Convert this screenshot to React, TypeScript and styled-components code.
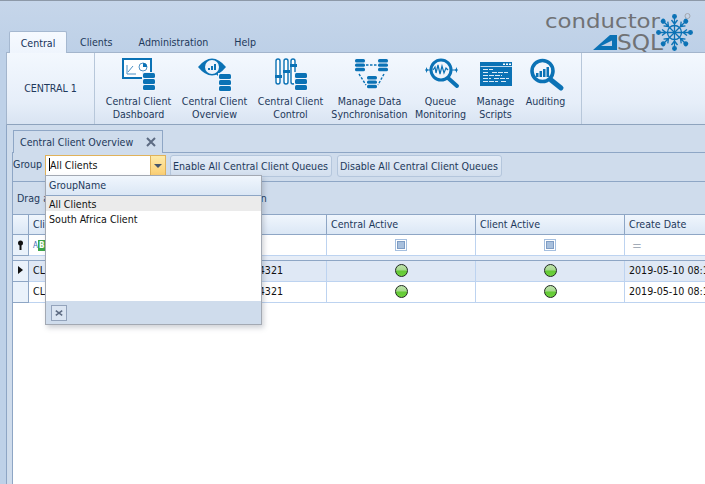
import React from 'react';
import styled, { createGlobalStyle } from 'styled-components';

const BLUE = '#0b72b5';

const GlobalStyle = createGlobalStyle`
    html, body {
        margin: 0;
        padding: 0;
        overflow: hidden;
        background: #fff;
    }
    * {
        box-sizing: border-box;
    }
`;

const Db = ({ x, y, w = 12, slab = 5 }: { x: number; y: number; w?: number; slab?: number }) => (
    <g>
        <rect x={x - 1} y={y - 1} width={w + 2} height={slab * 3 + 4} fill="#eef4fc" />
        {[0, 1, 2].map(i => (
            <rect key={i} x={x} y={y + i * (slab + 1)} width={w} height={slab} rx={1.5} fill={BLUE} />
        ))}
    </g>
);

const DashboardIcon = () => (
    <IconSvg viewBox="0 0 44 38">
        <rect x="6" y="4" width="28" height="19" fill="#fff" stroke={BLUE} strokeWidth="2" />
        <path d="M10 19V10M10 19H19M11 17L16 11" stroke="#4d90c4" strokeWidth="1" fill="none" />
        <circle cx="26" cy="12" r="4" fill="none" stroke="#4d90c4" strokeWidth="1" />
        <path d="M26 12V8A4 4 0 0 1 30 12Z" fill={BLUE} />
        <Db x={26} y={18} />
    </IconSvg>
);

const OverviewIcon = () => (
    <IconSvg viewBox="0 0 44 38">
        <path d="M5 12Q19 -5 33 12Q19 29 5 12Z" fill={BLUE} />
        <circle cx="19" cy="12" r="7" fill="#eef4fc" />
        <path d="M15 15h2v-2h-2zM18 15h2v-4h-2zM21 15h2v-6h-2z" fill={BLUE} />
        <path d="M24 18L28 22" stroke={BLUE} strokeWidth="3" />
        <Db x={26} y={19} />
    </IconSvg>
);

const ControlIcon = () => (
    <IconSvg viewBox="0 0 44 38">
        {[9, 17, 24].map(x => (
            <rect key={x} x={x - 2} y="4" width="4" height="25" rx="2" fill="#fff" stroke={BLUE} strokeWidth="1.4" />
        ))}
        <rect x="6" y="20" width="7" height="3" fill={BLUE} />
        <rect x="14" y="15" width="7" height="3" fill={BLUE} />
        <rect x="21" y="9" width="7" height="3" fill={BLUE} />
        <Db x={26} y={18} />
    </IconSvg>
);

const SyncIcon = () => (
    <IconSvg viewBox="0 0 44 38">
        <Db x={7} y={4} w={10} slab={3.4} />
        <Db x={30} y={4} w={10} slab={3.4} />
        <Db x={19} y={21} w={10} slab={3.4} />
        <path d="M18 10H29M11 19L18 30M36 19L30 30" stroke={BLUE} strokeWidth="1.4" strokeDasharray="2.5 1.5" fill="none" />
    </IconSvg>
);

const QueueIcon = () => (
    <IconSvg viewBox="0 0 44 38">
        <path d="M6 15H12M32 15H39" stroke={BLUE} strokeWidth="1.2" />
        <path d="M9 15L7 12V18Z" fill={BLUE} />
        <path d="M36 15L38 12V18Z" fill={BLUE} />
        <circle cx="22" cy="15" r="10" fill="#f0f5fc" stroke={BLUE} strokeWidth="3" />
        <path d="M14 15L16 12L17 18L19 10L21 19L23 11L25 18L27 13L29 15" fill="none" stroke={BLUE} strokeWidth="1.2" />
        <path d="M29 23L38 31" stroke={BLUE} strokeWidth="4" strokeLinecap="round" />
    </IconSvg>
);

const ScriptsIcon = () => (
    <IconSvg viewBox="0 0 44 38">
        <rect x="6" y="7" width="32" height="24" fill={BLUE} />
        <path d="M6.500 11.500H38" stroke="#eef4fc" strokeWidth="0.8" />
        <path d="M29 9.300h2M32 9.300h2M35 9.300h2" stroke="#fff" strokeWidth="1.4" />
        <path d="M9 14.500H19M9 17.500H15M18 17.500H34M9 20.500H28M9 23.500H17M20 23.500H35M9 26.500H24M27 26.500H32" stroke="#dcebf7" strokeWidth="1.2" strokeDasharray="5 1" />
    </IconSvg>
);

const AuditingIcon = () => (
    <IconSvg viewBox="0 0 44 38">
        <circle cx="18.500" cy="16" r="10.500" fill="#f0f5fc" stroke={BLUE} strokeWidth="3.600" />
        <path d="M12 22h2.500v-4H12zM15.500 22H18v-6h-2.500zM19 22h2.500v-8H19zM22.500 22H25v-10h-2.500z" fill={BLUE} />
        <path d="M27 25L37 33" stroke={BLUE} strokeWidth="5" strokeLinecap="round" />
    </IconSvg>
);

const ribbonButtons = [
    { lines: ['Central Client', 'Dashboard'], width: 65, icon: <DashboardIcon /> },
    { lines: ['Central Client', 'Overview'], width: 65, icon: <OverviewIcon /> },
    { lines: ['Central Client', 'Control'], width: 65, icon: <ControlIcon /> },
    { lines: ['Manage Data', 'Synchronisation'], width: 71, icon: <SyncIcon /> },
    { lines: ['Queue', 'Monitoring'], width: 49, icon: <QueueIcon /> },
    { lines: ['Manage', 'Scripts'], width: 39, icon: <ScriptsIcon /> },
    { lines: ['Auditing'], width: 39, icon: <AuditingIcon /> },
];

const Logo = () => (
    <LogoSvg viewBox="0 0 165 50">
        <text x="5" y="23" fontFamily="'DejaVu Sans', sans-serif" fontSize="19" fill="#707275" textLength="115" lengthAdjust="spacingAndGlyphs">conductor</text>
        <text x="77" y="45" fontFamily="'DejaVu Sans', sans-serif" fontSize="20.500" fill="#707275" textLength="46" lengthAdjust="spacingAndGlyphs">SQL</text>
        <path d="M53 45L70 30H77V45ZM61 41H72V35.500Z" fill={BLUE} fillRule="evenodd" />
        <g stroke={BLUE} strokeWidth="1.300" fill="none">
            <circle cx="134.500" cy="27.500" r="7" />
            {[0, 45, 90, 135, 180, 225, 270, 315].map(angle => (
                <g key={angle} transform={`rotate(${angle} 134.500 27.500)`}>
                    <path d="M134.500 27.500V12M134.500 19L131.500 15M134.500 19L137.500 15" />
                    <circle cx="134.500" cy="11.500" r="1.800" fill={BLUE} />
                </g>
            ))}
        </g>
        <circle cx="147.500" cy="11" r="2.500" fill="none" stroke="#9a9c9f" strokeWidth="0.8" />
    </LogoSvg>
);

const columns = '16px 150px 148px 149px 149px 1fr';

const StatusDot = () => <Dot />;

const rows = [
    { selected: true, name: 'CLIENT01', server: '192.168.1.20, 54321' },
    { selected: false, name: 'CLIENT02', server: '192.168.1.21, 54321' },
];

export default function App() {
    return (
        <Window>
            <GlobalStyle />
            <TitleBar>
                <Tabs>
                    <RibbonTab $active>Central</RibbonTab>
                    <RibbonTab>Clients</RibbonTab>
                    <RibbonTab>Administration</RibbonTab>
                    <RibbonTab>Help</RibbonTab>
                </Tabs>
                <Logo />
            </TitleBar>
            <Ribbon>
                <CaptionGroup>CENTRAL 1</CaptionGroup>
                <ButtonGroup>
                    {ribbonButtons.map(button => (
                        <RibbonButton key={button.lines[0] + button.lines[1]} $width={button.width}>
                            {button.icon}
                            {button.lines.map(line => <span key={line}>{line}</span>)}
                        </RibbonButton>
                    ))}
                </ButtonGroup>
            </Ribbon>
            <Content>
                <DocTabs>
                    <DocTab>
                        Central Client Overview
                        <CloseMark viewBox="0 0 10 10">
                            <path d="M1 1L9 9M9 1L1 9" />
                        </CloseMark>
                    </DocTab>
                </DocTabs>
                <DocPanel>
                    <Toolbar>
                        <GroupLabel>Group</GroupLabel>
                        <Combo>
                            <ComboInput><Caret />All Clients</ComboInput>
                            <ComboButton><Arrow /></ComboButton>
                            <Popup>
                                <PopupHeader>GroupName</PopupHeader>
                                <PopupList>
                                    <PopupItem $selected>All Clients</PopupItem>
                                    <PopupItem>South Africa Client</PopupItem>
                                </PopupList>
                                <PopupFooter>
                                    <PopupClose>
                                        <CloseMark viewBox="0 0 10 10" $small>
                                            <path d="M1 2L9 8M9 2L1 8" />
                                        </CloseMark>
                                    </PopupClose>
                                </PopupFooter>
                            </Popup>
                        </Combo>
                        <ToolButton>Enable All Central Client Queues</ToolButton>
                        <ToolButton>Disable All Central Client Queues</ToolButton>
                    </Toolbar>
                    <GridBox>
                        <GroupPanel>Drag a column header here to group by that column</GroupPanel>
                        <HeaderRow>
                            <HeaderCell />
                            <HeaderCell>Client Name</HeaderCell>
                            <HeaderCell>Server</HeaderCell>
                            <HeaderCell>Central Active</HeaderCell>
                            <HeaderCell>Client Active</HeaderCell>
                            <HeaderCell>Create Date</HeaderCell>
                        </HeaderRow>
                        <FilterRow>
                            <IndicatorCell>
                                <svg width="9" height="11" viewBox="0 0 9 11">
                                    <circle cx="4.500" cy="3" r="2.500" fill="#111" />
                                    <rect x="3.500" y="4" width="2" height="6" fill="#111" />
                                </svg>
                            </IndicatorCell>
                            <Cell><FilterAb>A<b>B</b></FilterAb></Cell>
                            <Cell />
                            <Cell $center><FilterCheck /></Cell>
                            <Cell $center><FilterCheck /></Cell>
                            <Cell><EqualsMark>=</EqualsMark></Cell>
                        </FilterRow>
                        <FilterGap />
                        {rows.map(row => (
                            <DataRow key={row.name} $selected={row.selected}>
                                <IndicatorCell>{row.selected && <RowArrow />}</IndicatorCell>
                                <Cell>{row.name}</Cell>
                                <Cell>{row.server}</Cell>
                                <Cell $center><StatusDot /></Cell>
                                <Cell $center><StatusDot /></Cell>
                                <Cell>2019-05-10 08:15:22</Cell>
                            </DataRow>
                        ))}
                    </GridBox>
                </DocPanel>
            </Content>
        </Window>
    );
}

const Window = styled.div`
    width: 705px;
    height: 484px;
    display: flex;
    flex-direction: column;
    overflow: hidden;
    background: #bed1e8;
    border-top: 1px solid #8d99a8;
    font-family: "DejaVu Sans Condensed", "Liberation Sans", sans-serif;
    font-stretch: condensed;
    font-size: 10.6px;
    color: #1e395b;
`;

const TitleBar = styled.div`
    height: 51px;
    flex: none;
    display: flex;
    align-items: flex-end;
    justify-content: space-between;
    background: linear-gradient(#c6d6ea, #bdd0e7);
`;

const Tabs = styled.div`
    display: flex;
    align-items: flex-end;
    padding-left: 9px;
`;

const RibbonTab = styled.div<{ $active?: boolean }>`
    height: ${p => (p.$active ? '22px' : '21px')};
    width: ${p => (p.$active ? '58px' : 'auto')};
    padding: 0 12px;
    display: flex;
    align-items: center;
    justify-content: center;
    border: 1px solid ${p => (p.$active ? '#a5b8d0' : 'transparent')};
    border-bottom: none;
    border-radius: 2px 2px 0 0;
    background: ${p => (p.$active ? 'linear-gradient(#f6faff, #eff5fd)' : 'transparent')};
    color: ${p => (p.$active ? '#15325a' : '#1e395b')};
    position: relative;
    z-index: 1;
    margin-bottom: ${p => (p.$active ? '-1px' : '0')};
`;

const LogoSvg = styled.svg`
    width: 165px;
    height: 50px;
    margin-bottom: -3px;
    flex: none;
`;

const Ribbon = styled.div`
    height: 73px;
    flex: none;
    margin-left: 6px;
    display: flex;
    border: 1px solid #a3b5cc;
    border-right: none;
    border-bottom-color: #8ea3bd;
    background: linear-gradient(#f3f8fe, #e6eef9 70%, #d9e4f2);
`;

const CaptionGroup = styled.div`
    width: 88px;
    flex: none;
    display: flex;
    align-items: center;
    justify-content: center;
    padding-bottom: 2px;
    border-right: 1px solid #b7c7da;
`;

const ButtonGroup = styled.div`
    width: 487px;
    flex: none;
    display: flex;
    gap: 11px;
    padding-left: 11px;
    border-right: 1px solid #b7c7da;
`;

const RibbonButton = styled.div<{ $width: number }>`
    width: ${p => p.$width}px;
    flex: none;
    display: flex;
    flex-direction: column;
    align-items: center;
    padding-top: 2px;
    line-height: 13px;
    white-space: nowrap;
`;

const IconSvg = styled.svg`
    width: 44px;
    height: 38px;
    flex: none;
    margin-bottom: 2px;
`;

const Content = styled.div`
    flex: 1;
    min-height: 0;
    display: flex;
    flex-direction: column;
    margin-left: 6px;
    padding-top: 5px;
    background: #cfdcec;
    border-left: 1px solid #8ea6c5;
`;

const DocTabs = styled.div`
    height: 22px;
    flex: none;
    padding-left: 6px;
    display: flex;
    position: relative;
    z-index: 1;
`;

const DocTab = styled.div`
    width: 150px;
    height: 23px;
    display: flex;
    align-items: center;
    justify-content: space-between;
    padding: 0 6px 0 6px;
    border: 1px solid #8ea6c5;
    border-bottom: none;
    background: #cfdcec;
`;

const CloseMark = styled.svg<{ $small?: boolean }>`
    width: ${p => (p.$small ? 8 : 10)}px;
    height: ${p => (p.$small ? 8 : 10)}px;
    flex: none;
    stroke: #5d6b82;
    stroke-width: 2;
    fill: none;
`;

const DocPanel = styled.div`
    flex: 1;
    min-height: 0;
    display: flex;
    flex-direction: column;
    margin-left: 5px;
    border-left: 1px solid #8ea6c5;
    border-top: 1px solid #8ea6c5;
`;

const Toolbar = styled.div`
    height: 28px;
    flex: none;
    display: flex;
    align-items: flex-start;
    padding-top: 2px;
    background: #cfdcec;
`;

const GroupLabel = styled.div`
    width: 32px;
    height: 21px;
    line-height: 19px;
`;

const Combo = styled.div`
    width: 121px;
    height: 21px;
    display: flex;
    flex: none;
    position: relative;
    margin-right: 4px;
`;

const ComboInput = styled.div`
    flex: 1;
    display: flex;
    align-items: center;
    padding: 0 0 2px 3px;
    background: #fff;
    border: 1px solid #e0b25a;
    border-right: none;
    color: #111;
`;

const Caret = styled.span`
    width: 1px;
    height: 13px;
    background: #000;
`;

const ComboButton = styled.div`
    width: 16px;
    flex: none;
    display: flex;
    align-items: center;
    justify-content: center;
    border: 1px solid #e0b25a;
    background: linear-gradient(#fdeaa9, #fbcf74);
`;

const Arrow = styled.span`
    width: 0;
    height: 0;
    border-left: 4px solid transparent;
    border-right: 4px solid transparent;
    border-top: 4px solid #45556b;
`;

const Popup = styled.div`
    position: absolute;
    left: 0;
    top: 20px;
    width: 217px;
    height: 150px;
    z-index: 5;
    display: flex;
    flex-direction: column;
    background: #fff;
    border: 1px solid #a3a9b3;
    box-shadow: 2px 3px 5px rgba(70, 80, 100, 0.25);
`;

const PopupHeader = styled.div`
    height: 20px;
    flex: none;
    display: flex;
    align-items: center;
    padding: 0 0 2px 3px;
    background: linear-gradient(#f0f6fd, #dbe7f5);
    border-bottom: 1px solid #8ea6c5;
`;

const PopupList = styled.div`
    flex: 1;
    min-height: 0;
    color: #111;
`;

const PopupItem = styled.div<{ $selected?: boolean }>`
    height: 15px;
    line-height: 17px;
    padding-left: 3px;
    background: ${p => (p.$selected ? '#ebebeb' : 'transparent')};
`;

const PopupFooter = styled.div`
    height: 23px;
    flex: none;
    display: flex;
    align-items: center;
    padding-left: 5px;
    background: #cfdcec;
`;

const PopupClose = styled.div`
    width: 16px;
    height: 16px;
    display: flex;
    align-items: center;
    justify-content: center;
    border: 1px solid #93a3bb;
    background: #dbe5f2;
`;

const ToolButton = styled.div`
    height: 22px;
    flex: none;
    margin-right: 5px;
    padding: 0 3px 0 2px;
    display: flex;
    align-items: center;
    border: 1px solid #b4c6dc;
    border-radius: 3px;
    background: linear-gradient(#e2ebf6, #d3dfee);
`;

const GridBox = styled.div`
    flex: 1;
    min-height: 0;
    display: flex;
    flex-direction: column;
    background: #fff;
    border-top: 1px solid #8ea6c5;
`;

const GroupPanel = styled.div`
    height: 32px;
    flex: none;
    display: flex;
    align-items: center;
    padding-left: 4px;
    background: #cfdcec;
`;

const HeaderRow = styled.div`
    height: 21px;
    flex: none;
    display: grid;
    grid-template-columns: ${columns};
    border-top: 1px solid #8ea6c5;
    border-bottom: 1px solid #8ea6c5;
    background: linear-gradient(#f0f6fd, #dbe7f5);
`;

const HeaderCell = styled.div`
    display: flex;
    align-items: center;
    padding: 0 0 2px 4px;
    border-right: 1px solid #8ea6c5;
    white-space: nowrap;
    overflow: hidden;
    &:last-child {
        border-right: none;
    }
`;

const FilterRow = styled.div`
    height: 21px;
    flex: none;
    display: grid;
    grid-template-columns: ${columns};
    background: #fff;
    border-bottom: 1px solid #bdd3f0;
`;

const FilterGap = styled.div`
    height: 5px;
    flex: none;
    background: #e6edf7;
    border-bottom: 1px solid #8ea6c5;
`;

const DataRow = styled.div<{ $selected?: boolean }>`
    height: 21px;
    flex: none;
    display: grid;
    grid-template-columns: ${columns};
    background: ${p => (p.$selected ? '#dfe8f5' : '#fff')};
    border-bottom: 1px solid #bdd3f0;
    color: #111;
    & > div {
        padding-bottom: 2px;
    }
`;

const Cell = styled.div<{ $center?: boolean }>`
    display: flex;
    align-items: center;
    justify-content: ${p => (p.$center ? 'center' : 'flex-start')};
    padding-left: ${p => (p.$center ? 0 : 4)}px;
    border-right: 1px solid #bdd3f0;
    white-space: nowrap;
    overflow: hidden;
    &:last-child {
        border-right: none;
    }
`;

const IndicatorCell = styled.div`
    display: flex;
    align-items: center;
    justify-content: center;
    background: #eaf2fb;
    border-right: 1px solid #8ea6c5;
    border-bottom: 1px solid #8ea6c5;
    margin-bottom: -1px;
`;

const RowArrow = styled.span`
    width: 0;
    height: 0;
    border-top: 4px solid transparent;
    border-bottom: 4px solid transparent;
    border-left: 5px solid #111;
`;

const FilterAb = styled.span`
    font-size: 8px;
    color: #3d6eb5;
    & b {
        background: #3da64a;
        color: #fff;
        padding: 1px;
    }
`;

const FilterCheck = styled.span`
    width: 12px;
    height: 12px;
    background: #a8c0dd;
    border: 1px solid #a5bfdf;
    box-shadow: inset 0 0 0 1px #fff, inset 0 0 0 2px #7f9dc4;
`;

const EqualsMark = styled.span`
    color: #a3acb8;
    font-size: 13px;
    padding-left: 3px;
`;

const Dot = styled.span`
    width: 13px;
    height: 13px;
    border-radius: 50%;
    border: 1px solid #1f2a1f;
    background: linear-gradient(#bfe3ae 0%, #a4d98b 48%, #62c934 52%, #6fd13f 100%);
`;
